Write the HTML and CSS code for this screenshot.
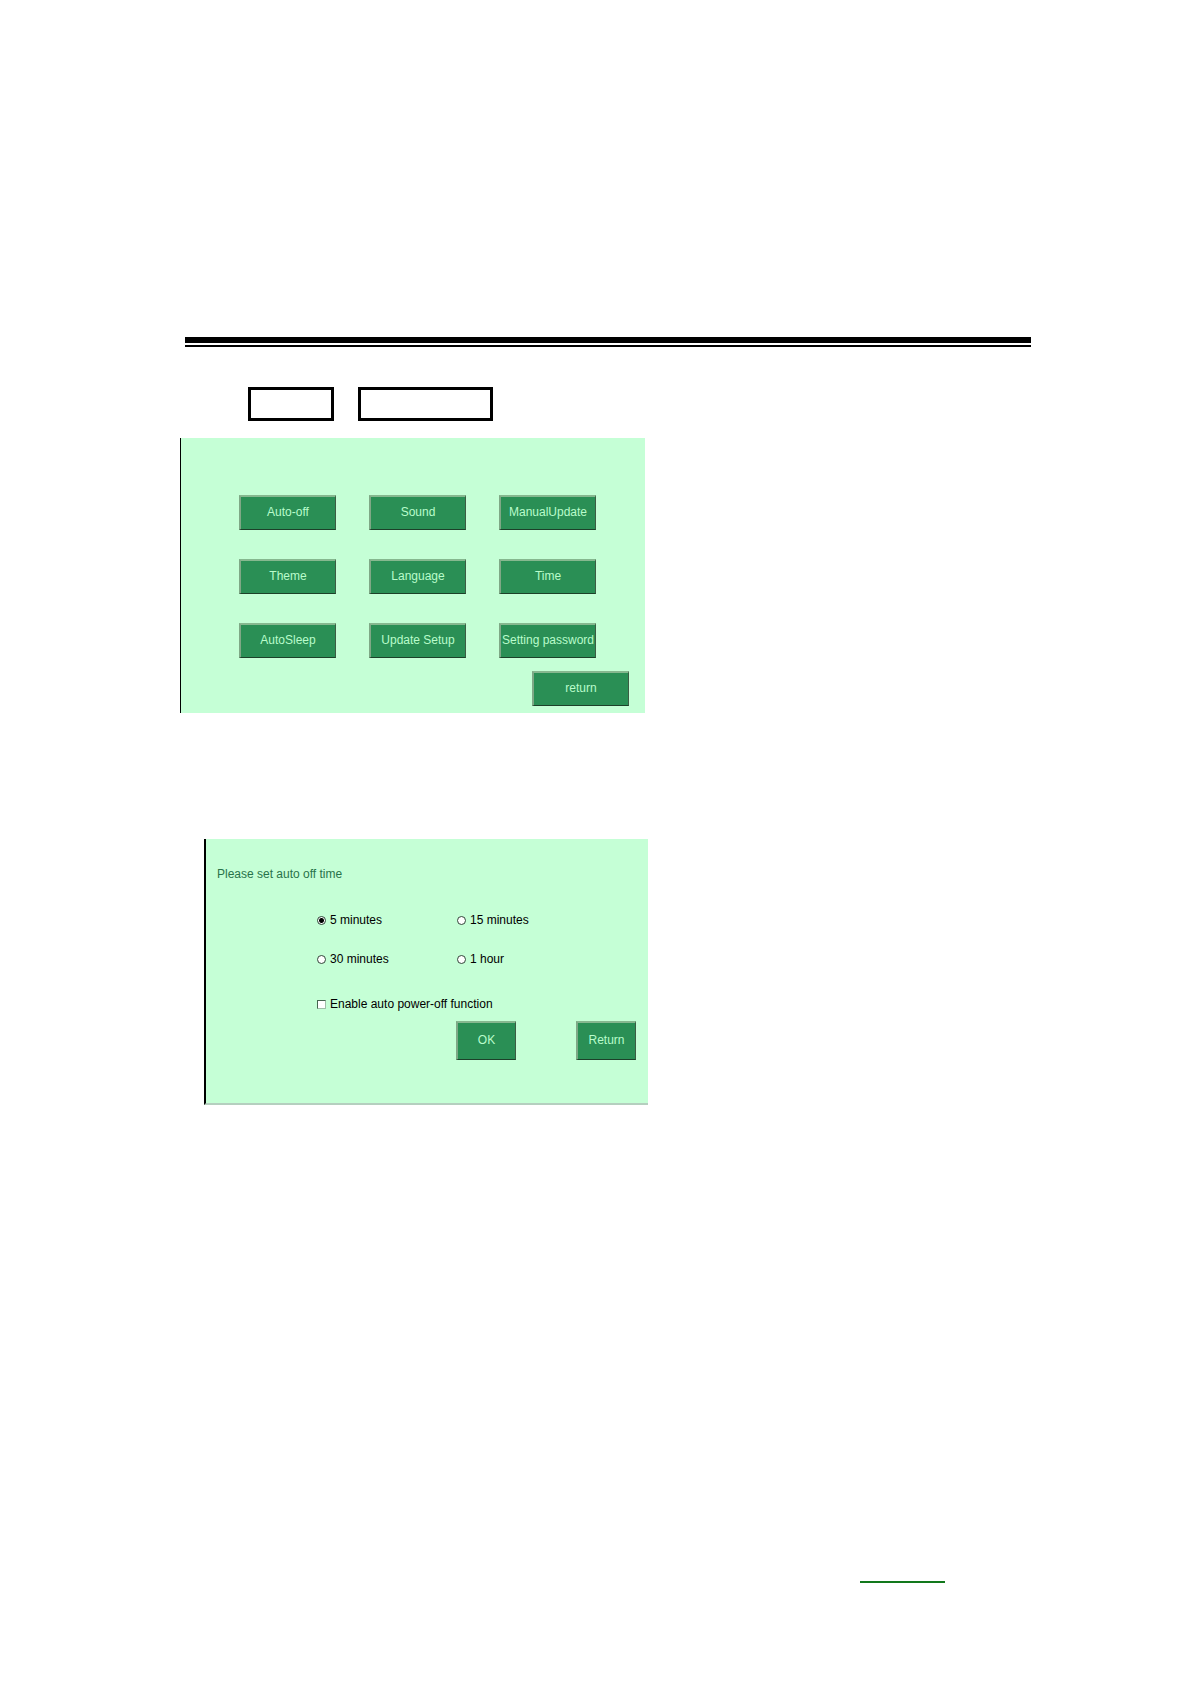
FILE: index.html
```html
<!DOCTYPE html>
<html lang="en">
<head>
<meta charset="utf-8">
<meta name="viewport" content="width=device-width, initial-scale=1">
<title>Setup</title>
<link rel="stylesheet" href="styles.css">
</head>
<body>
<main class="page">
  <div class="rule"></div>
  <div class="frames">
    <div class="frame frame-short"></div>
    <div class="frame frame-long"></div>
  </div>
  <section class="panel setup">
    <div class="setup-grid">
      <button type="button" class="btn">Auto-off</button>
      <button type="button" class="btn">Sound</button>
      <button type="button" class="btn">ManualUpdate</button>
      <button type="button" class="btn">Theme</button>
      <button type="button" class="btn">Language</button>
      <button type="button" class="btn">Time</button>
      <button type="button" class="btn">AutoSleep</button>
      <button type="button" class="btn">Update Setup</button>
      <button type="button" class="btn">Setting password</button>
    </div>
    <div class="setup-actions">
      <button type="button" class="btn">return</button>
    </div>
  </section>
  <form class="panel auto-off">
    <p class="prompt">Please set auto off time</p>
    <div class="times">
      <label class="option"><input type="radio" name="time" checked>5 minutes</label>
      <label class="option"><input type="radio" name="time">15 minutes</label>
      <label class="option"><input type="radio" name="time">30 minutes</label>
      <label class="option"><input type="radio" name="time">1 hour</label>
    </div>
    <label class="option enable"><input type="checkbox">Enable auto power-off function</label>
    <div class="form-actions">
      <button type="button" class="btn">OK</button>
      <button type="button" class="btn">Return</button>
    </div>
  </form>
  <footer class="footer"><div class="footer-line"></div></footer>
</main>
</body>
</html>
```
FILE: styles.css
```css
* {
  box-sizing: border-box;
}

body {
  margin: 0;
  background: #fff;
  font: 12px/16px "Liberation Sans", Arial, sans-serif;
  color: #000;
}

.page {
  display: flex;
  flex-direction: column;
  min-height: 100vh;
  padding: 337px 160px 101px 180px;
}

.rule {
  height: 10px;
  margin-left: 5px;
  border-top: 6px solid #000;
  border-bottom: 2px solid #000;
}

.frames {
  display: flex;
  gap: 24px;
  margin: 40px 0 17px 68px;
}

.frame {
  height: 34px;
  border: 3px solid #000;
}

.frame-short {
  width: 86px;
}

.frame-long {
  width: 135px;
}

.panel {
  background: #c5ffd6;
}

.btn {
  height: 35px;
  padding: 0 0 3px;
  border: 2px solid;
  border-color: #86b88f #3c5c44 #1c4029 #7fa886;
  border-right-width: 1px;
  border-bottom-width: 1px;
  background: #2a8f55;
  color: #b9fccb;
  font: inherit;
  white-space: nowrap;
}

.setup {
  width: 100%;
  max-width: 465px;
  padding: 57px 16px 7px 58px;
  border-left: 1px solid #000;
}

.setup-grid {
  display: grid;
  grid-template-columns: repeat(3, 97px);
  gap: 29px 33px;
}

.setup-actions {
  display: flex;
  justify-content: flex-end;
  margin-top: 13px;
}

.setup-actions .btn {
  width: 97px;
}

.auto-off {
  width: 100%;
  max-width: 444px;
  margin: 126px 0 0 24px;
  padding: 27px 12px 43px 11px;
  border-left: 2px solid #000;
  border-bottom: 2px solid #b5cfbf;
}

.prompt {
  margin: 0;
  color: #28734a;
}

.times {
  display: grid;
  grid-template-columns: repeat(2, 140px);
  gap: 23px 0;
  margin: 30px 0 0 100px;
}

.option {
  display: flex;
  align-items: center;
  gap: 4px;
}

.option input {
  appearance: none;
  flex: none;
  width: 9px;
  height: 9px;
  margin: 0;
  border: 1px solid #304438;
  background: #fff;
}

.option input[type="radio"] {
  border-radius: 50%;
}

.option input[type="radio"]:checked {
  background: radial-gradient(circle, #000 0 2px, #fff 3px);
}

.option input[type="checkbox"] {
  border-color: #456650 #9fbea8 #9fbea8 #456650;
}

.enable {
  margin: 29px 0 0 100px;
}

.form-actions {
  display: flex;
  justify-content: flex-end;
  gap: 60px;
  margin-top: 9px;
}

.form-actions .btn {
  width: 60px;
  height: 39px;
}

.footer {
  display: flex;
  justify-content: flex-end;
  margin-top: auto;
  padding-right: 86px;
}

.footer-line {
  width: 85px;
  height: 2px;
  background: #12781c;
}
```
